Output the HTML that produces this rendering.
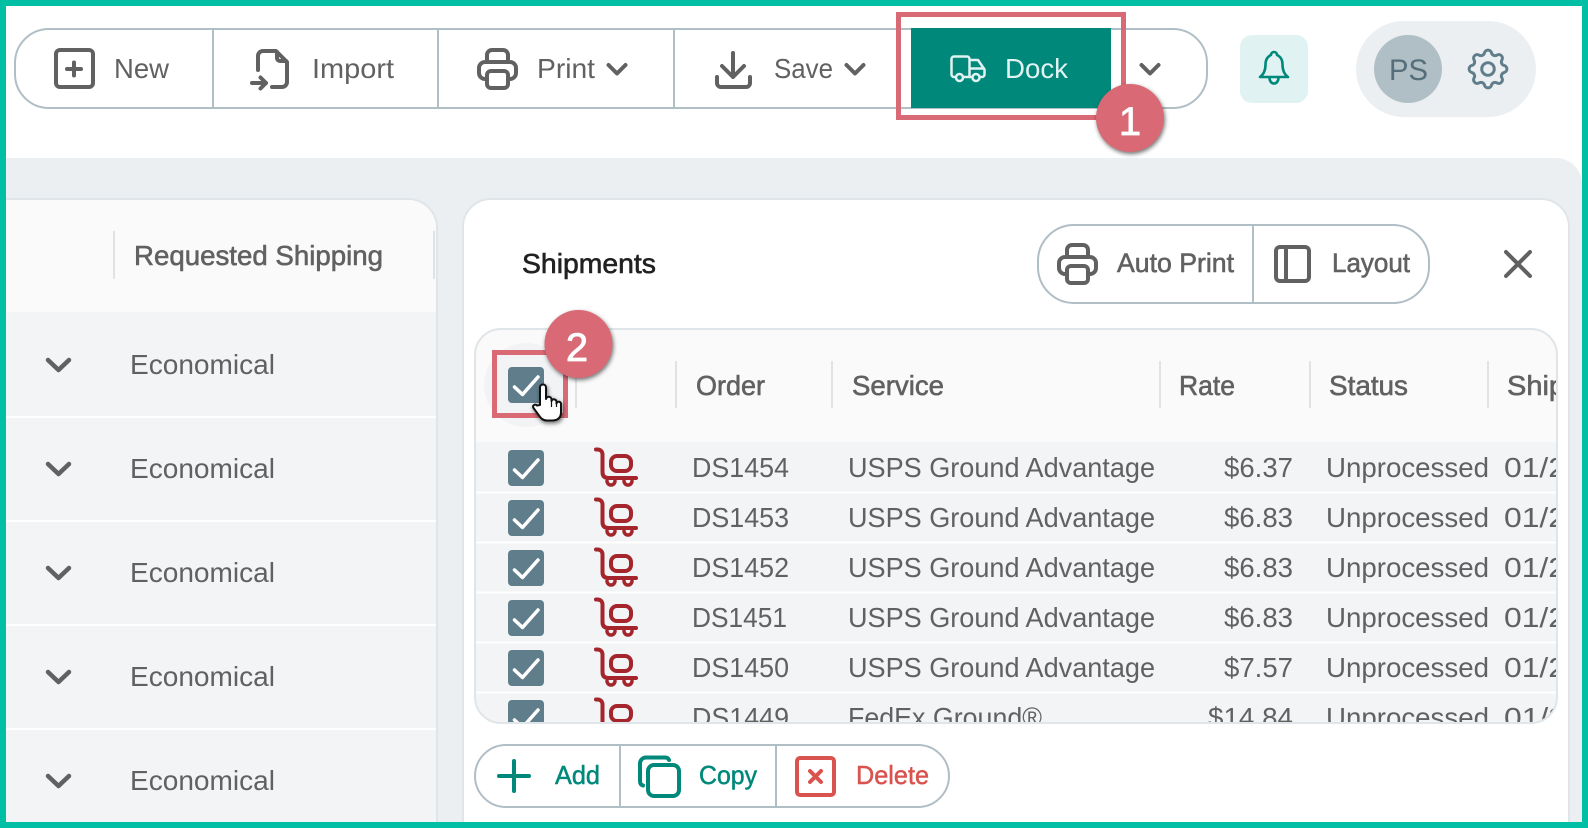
<!DOCTYPE html>
<html><head><meta charset="utf-8"><style>
html,body{margin:0;padding:0;width:1588px;height:828px;overflow:hidden;background:#fff}
svg{display:block}
text{font-family:"Liberation Sans",sans-serif;font-size:28px;fill:#616161}
.m{stroke:#616161;stroke-width:.6px}
.i{fill:none;stroke:#616161;stroke-width:4;stroke-linecap:round;stroke-linejoin:round}
.g{fill:#fff;stroke:#b0bec5;stroke-width:2}
.d{stroke:#b0bec5;stroke-width:2}
.h{stroke:#dfe3e6;stroke-width:2}
.b{filter:drop-shadow(1px 2px 2px rgba(0,0,0,.55))}
</style></head><body>
<svg width="1588" height="828" viewBox="0 0 1588 828" xmlns="http://www.w3.org/2000/svg">
<defs>
<clipPath id="tc"><rect x="475" y="329" width="1082" height="394" rx="26"/></clipPath>
<g id="cb"><rect x="508" y="0" width="36" height="36" rx="4" fill="#607d8b"/><path d="M514.500 20L522.500 27.500 538 10" fill="none" stroke="#fff" stroke-width="3.500" stroke-linecap="round" stroke-linejoin="round"/></g>
<g id="cart" fill="none" stroke="#a4262c" stroke-width="4" stroke-linecap="round" stroke-linejoin="round"><path d="M596 449.500h1.500c3 0 5 2 5 5V472c0 4 2 6 6 6H636"/><rect x="611" y="456" width="20" height="15" rx="6"/><path d="M607 481a4 4 0 0 0 8 0M624 481a4 4 0 0 0 8 0" stroke-width="3.500"/></g>
<path id="chev" d="M1.500 1l8.500 8.500 8.500-8.500" fill="none" stroke="#616161" stroke-width="4" stroke-linecap="round" stroke-linejoin="round"/>
<path id="chevb" d="M0 0l10.500 10 10.500-10" fill="none" stroke="#616161" stroke-width="4.500" stroke-linecap="round" stroke-linejoin="round"/>
</defs>

<!-- toolbar -->
<rect x="15" y="29" width="1192" height="79" rx="34" class="g"/>
<path d="M213 29V108M438 29V108M674 29V108" class="d"/>
<rect x="56" y="50" width="37" height="37" rx="4" class="i"/>
<path d="M67 69H81M74 62.500V75.500" class="i" stroke-width="3.500"/>
<text x="114" y="78" textLength="55" lengthAdjust="spacingAndGlyphs">New</text>
<path d="M258 70V56a5 5 0 0 1 5-5H276L287 62V82a5 5 0 0 1-5 5H272" class="i"/>
<path d="M277 52V58a3 3 0 0 0 3 3H286" class="i" stroke-width="2.500"/>
<path d="M252 83H266M260.500 77.500L266 83 260.500 88.500" class="i"/>
<text x="312" y="78" textLength="82" lengthAdjust="spacingAndGlyphs">Import</text>
<path d="M487 62V55a5 5 0 0 1 5-5H503a5 5 0 0 1 5 5V62M487 79H485a6 6 0 0 1-6-6V68a6 6 0 0 1 6-6H510a6 6 0 0 1 6 6V73a6 6 0 0 1-6 6H508" class="i"/>
<rect x="487" y="71" width="21" height="17" rx="4" class="i"/>
<text x="537" y="78" textLength="58" lengthAdjust="spacingAndGlyphs">Print</text>
<use href="#chev" x="607" y="64"/>
<path d="M733 53V77M722 66L733 77 744 66M717 77V83a4 4 0 0 0 4 4H746a4 4 0 0 0 4-4V77" class="i"/>
<text x="774" y="78" textLength="59" lengthAdjust="spacingAndGlyphs">Save</text>
<use href="#chev" x="845" y="64"/>
<use href="#chev" x="1140" y="64"/>

<rect x="911" y="28" width="200" height="80" fill="#00897b"/>
<g fill="none" stroke="#e0f2f1" stroke-width="2.500" stroke-linecap="round" stroke-linejoin="round">
<path d="M955.500 77H954a2.500 2.500 0 0 1-2.500-2.500V59a2.500 2.500 0 0 1 2.500-2.500H967a2.500 2.500 0 0 1 2.500 2.500V77M963.500 77H972M969.500 60H978L984.500 69.500V74.500a2.500 2.500 0 0 1-2.500 2.500H980M969.500 68.500H984"/>
<circle cx="959.500" cy="77.500" r="3.500"/><circle cx="976" cy="77.500" r="3.500"/></g>
<text x="1005" y="78" textLength="63" lengthAdjust="spacingAndGlyphs" style="fill:#e0f2f1">Dock</text>
<rect x="898.500" y="14.500" width="225" height="103" fill="none" stroke="#d96a75" stroke-width="5"/>

<rect x="1240" y="35" width="68" height="68" rx="12" fill="#e0f2f1"/>
<path d="M1274 52c-1.500 0-3 1.200-3 3-4 1.800-5.500 5-5.500 9.500 0 6-2 10-5.500 12.500H1288c-3.500-2.500-5.500-6.500-5.500-12.500 0-4.500-1.500-7.700-5.500-9.500 0-1.800-1.500-3-3-3zM1269.500 77.500c0 8 9 8 9 0" fill="none" stroke="#00897b" stroke-width="2.600" stroke-linecap="round" stroke-linejoin="round"/>
<rect x="1356" y="21" width="180" height="96" rx="48" fill="#eceff1"/>
<circle cx="1408" cy="69" r="34" fill="#b0bec5"/>
<text x="1389" y="80" textLength="39" lengthAdjust="spacingAndGlyphs" style="font-size:30px;fill:#546e7a">PS</text>
<g transform="translate(1488 69) scale(2.1) translate(-12 -12)" fill="none" stroke="#607d8b" stroke-width="1.400" stroke-linejoin="round"><path d="M10.325 4.317c.426-1.756 2.924-1.756 3.350 0a1.724 1.724 0 0 0 2.573 1.066c1.543-.94 3.310.826 2.370 2.370a1.724 1.724 0 0 0 1.065 2.572c1.756.426 1.756 2.924 0 3.350a1.724 1.724 0 0 0-1.066 2.573c.94 1.543-.826 3.310-2.370 2.370a1.724 1.724 0 0 0-2.572 1.065c-.426 1.756-2.924 1.756-3.350 0a1.724 1.724 0 0 0-2.573-1.066c-1.543.94-3.310-.826-2.370-2.370a1.724 1.724 0 0 0-1.065-2.572c-1.756-.426-1.756-2.924 0-3.350a1.724 1.724 0 0 0 1.066-2.573c-.94-1.543.826-3.310 2.370-2.370 1 .608 2.296.07 2.572-1.065z"/><circle cx="12" cy="12" r="3"/></g>

<!-- gray area -->
<path d="M0 158H1556a26 26 0 0 1 26 26V828H0z" fill="#eceff1"/>

<!-- left panel -->
<path d="M0 199H408a29 29 0 0 1 29 29V828H0z" fill="#f2f4f6" stroke="#dfe5e8" stroke-width="2"/>
<path d="M0 200H408a28 28 0 0 1 28 28V312H0z" fill="#fafafa"/>
<path d="M114 231V279M434 231V279" class="h"/>
<text x="134" y="265" textLength="249" lengthAdjust="spacingAndGlyphs" class="m">Requested Shipping</text>
<path d="M0 417H436M0 521H436M0 625H436M0 729H436" stroke="#fff" stroke-width="2"/>
<use href="#chevb" x="48" y="360"/><text x="130" y="374" textLength="145" lengthAdjust="spacingAndGlyphs">Economical</text>
<use href="#chevb" x="48" y="464"/><text x="130" y="478" textLength="145" lengthAdjust="spacingAndGlyphs">Economical</text>
<use href="#chevb" x="48" y="568"/><text x="130" y="582" textLength="145" lengthAdjust="spacingAndGlyphs">Economical</text>
<use href="#chevb" x="48" y="672"/><text x="130" y="686" textLength="145" lengthAdjust="spacingAndGlyphs">Economical</text>
<use href="#chevb" x="48" y="776"/><text x="130" y="790" textLength="145" lengthAdjust="spacingAndGlyphs">Economical</text>

<!-- right panel -->
<path d="M463 828V227a28 28 0 0 1 28-28H1541a28 28 0 0 1 28 28V828z" fill="#fff" stroke="#dfe5e8" stroke-width="2"/>
<text x="522" y="273" textLength="134" lengthAdjust="spacingAndGlyphs" style="fill:#212121;stroke:#212121;stroke-width:.6px">Shipments</text>
<rect x="1038" y="225" width="391" height="78" rx="36" class="g"/>
<path d="M1253 225V303" class="d"/>
<path d="M1067 257V250a5 5 0 0 1 5-5H1083a5 5 0 0 1 5 5V257M1067 274H1065a6 6 0 0 1-6-6V263a6 6 0 0 1 6-6H1090a6 6 0 0 1 6 6V268a6 6 0 0 1-6 6H1088" class="i"/>
<rect x="1067" y="266" width="21" height="17" rx="4" class="i"/>
<text x="1117" y="272" textLength="117" lengthAdjust="spacingAndGlyphs" style="font-size:27px" class="m">Auto Print</text>
<rect x="1276" y="247" width="33" height="34" rx="4" class="i"/>
<path d="M1286 248V280" class="i" stroke-width="3"/>
<text x="1332" y="272" textLength="78" lengthAdjust="spacingAndGlyphs" style="font-size:27px" class="m">Layout</text>
<path d="M1506 252L1530 276M1530 252L1506 276" class="i" stroke-width="3.500" stroke-linecap="butt"/>

<!-- table -->
<g clip-path="url(#tc)">
<rect x="475" y="329" width="1082" height="394" fill="#f2f4f6"/>
<rect x="475" y="329" width="1082" height="113" fill="#fafafa"/>
<circle cx="526" cy="385" r="42" fill="#f1f3f5"/>
<path d="M475 492.500H1557M475 542.500H1557M475 592.500H1557M475 642.500H1557M475 692.500H1557" stroke="#fff" stroke-width="2"/>
<path d="M576 361V408M676 361V408M832 361V408M1160 361V408M1310 361V408M1488 361V408" class="h"/>
<use href="#cb" y="367"/>
<text x="696" y="395" textLength="69" lengthAdjust="spacingAndGlyphs" class="m">Order</text>
<text x="852" y="395" textLength="92" lengthAdjust="spacingAndGlyphs" class="m">Service</text>
<text x="1179" y="395" textLength="56" lengthAdjust="spacingAndGlyphs" class="m">Rate</text>
<text x="1329" y="395" textLength="79" lengthAdjust="spacingAndGlyphs" class="m">Status</text>
<text x="1507" y="395" textLength="58" lengthAdjust="spacingAndGlyphs" class="m">Ship</text>

<use href="#cb" y="450"/><use href="#cart"/>
<text x="692" y="477" textLength="97" lengthAdjust="spacingAndGlyphs">DS1454</text><text x="848" y="477" textLength="307" lengthAdjust="spacingAndGlyphs">USPS Ground Advantage</text><text x="1224" y="477" textLength="69" lengthAdjust="spacingAndGlyphs">$6.37</text><text x="1326" y="477" textLength="163" lengthAdjust="spacingAndGlyphs">Unprocessed</text><text x="1504" y="477" textLength="62" lengthAdjust="spacingAndGlyphs">01/2</text>
<use href="#cb" y="500"/><use href="#cart" y="50"/>
<text x="692" y="527" textLength="97" lengthAdjust="spacingAndGlyphs">DS1453</text><text x="848" y="527" textLength="307" lengthAdjust="spacingAndGlyphs">USPS Ground Advantage</text><text x="1224" y="527" textLength="69" lengthAdjust="spacingAndGlyphs">$6.83</text><text x="1326" y="527" textLength="163" lengthAdjust="spacingAndGlyphs">Unprocessed</text><text x="1504" y="527" textLength="62" lengthAdjust="spacingAndGlyphs">01/2</text>
<use href="#cb" y="550"/><use href="#cart" y="100"/>
<text x="692" y="577" textLength="97" lengthAdjust="spacingAndGlyphs">DS1452</text><text x="848" y="577" textLength="307" lengthAdjust="spacingAndGlyphs">USPS Ground Advantage</text><text x="1224" y="577" textLength="69" lengthAdjust="spacingAndGlyphs">$6.83</text><text x="1326" y="577" textLength="163" lengthAdjust="spacingAndGlyphs">Unprocessed</text><text x="1504" y="577" textLength="62" lengthAdjust="spacingAndGlyphs">01/2</text>
<use href="#cb" y="600"/><use href="#cart" y="150"/>
<text x="692" y="627" textLength="95" lengthAdjust="spacingAndGlyphs">DS1451</text><text x="848" y="627" textLength="307" lengthAdjust="spacingAndGlyphs">USPS Ground Advantage</text><text x="1224" y="627" textLength="69" lengthAdjust="spacingAndGlyphs">$6.83</text><text x="1326" y="627" textLength="163" lengthAdjust="spacingAndGlyphs">Unprocessed</text><text x="1504" y="627" textLength="62" lengthAdjust="spacingAndGlyphs">01/2</text>
<use href="#cb" y="650"/><use href="#cart" y="200"/>
<text x="692" y="677" textLength="97" lengthAdjust="spacingAndGlyphs">DS1450</text><text x="848" y="677" textLength="307" lengthAdjust="spacingAndGlyphs">USPS Ground Advantage</text><text x="1224" y="677" textLength="69" lengthAdjust="spacingAndGlyphs">$7.57</text><text x="1326" y="677" textLength="163" lengthAdjust="spacingAndGlyphs">Unprocessed</text><text x="1504" y="677" textLength="62" lengthAdjust="spacingAndGlyphs">01/2</text>
<use href="#cb" y="700"/><use href="#cart" y="250"/>
<text x="692" y="727" textLength="97" lengthAdjust="spacingAndGlyphs">DS1449</text><text x="848" y="727" textLength="194" lengthAdjust="spacingAndGlyphs">FedEx Ground®</text><text x="1208" y="727" textLength="85" lengthAdjust="spacingAndGlyphs">$14.84</text><text x="1326" y="727" textLength="163" lengthAdjust="spacingAndGlyphs">Unprocessed</text><text x="1504" y="727" textLength="62" lengthAdjust="spacingAndGlyphs">01/2</text>
</g>
<rect x="475" y="329" width="1082" height="394" rx="26" fill="none" stroke="#dfe5e8" stroke-width="2"/>

<!-- bottom buttons -->
<rect x="475" y="745" width="474" height="62" rx="31" class="g"/>
<path d="M620 745V807M776 745V807" class="d"/>
<path d="M499 776H529M514 761V791" class="i" style="stroke:#00897b"/>
<text x="555" y="784" textLength="45" lengthAdjust="spacingAndGlyphs" style="font-size:26px;fill:#00897b;stroke:#00897b;stroke-width:.5px">Add</text>
<rect x="648" y="765" width="31" height="31" rx="6" class="i" style="stroke:#00897b"/>
<path d="M643 785.500C641 785 640 783.500 640 781V763.500a6 6 0 0 1 6-6H665c2 0 3.500 1 4 2.500" class="i" style="stroke:#00897b"/>
<text x="699" y="784" textLength="58" lengthAdjust="spacingAndGlyphs" style="font-size:26px;fill:#00897b;stroke:#00897b;stroke-width:.5px">Copy</text>
<rect x="797" y="758" width="37" height="37" rx="3" class="i" style="stroke:#d9534f"/>
<path d="M810 771L821 782M821 771L810 782" class="i" style="stroke:#d9534f"/>
<text x="856" y="784" textLength="73" lengthAdjust="spacingAndGlyphs" style="font-size:26px;fill:#d9534f;stroke:#d9534f;stroke-width:.5px">Delete</text>

<!-- annotation 2 -->
<rect x="494.500" y="352.500" width="71" height="63" fill="none" stroke="#d96a75" stroke-width="5"/>
<g class="b"><circle cx="578.500" cy="344" r="34" fill="#d96a75"/></g>
<text x="577" y="361" text-anchor="middle" style="font-size:40px;fill:#fff;stroke:#fff;stroke-width:.8px">2</text>
<g class="b"><path d="M540 405V387.500a3 3 0 0 1 6 0V399V399a2.800 2.800 0 0 1 5.500 0V401a2.600 2.600 0 0 1 5 .5V403.500a2.300 2.300 0 0 1 4.500 1V412c0 5.500-3 8.500-9 8.500h-5c-4 0-6-2-8-5l-5.500-7.500c-1.500-2.500 1.500-4.500 3.500-2.500z" fill="#fff" stroke="#111" stroke-width="2" stroke-linejoin="round"/>
<path d="M551.500 400V407M556.500 402V407" stroke="#111" stroke-width="1.200" fill="none"/></g>

<!-- annotation 1 -->
<g class="b"><circle cx="1130" cy="118" r="34" fill="#d96a75"/></g>
<text x="1130" y="135" text-anchor="middle" style="font-size:40px;fill:#fff;stroke:#fff;stroke-width:.8px">1</text>

<!-- teal frame -->
<path d="M0 0H1588V828H0zM6 6V822H1582V6z" fill="#00bfa5" fill-rule="evenodd"/>
</svg>
</body></html>
